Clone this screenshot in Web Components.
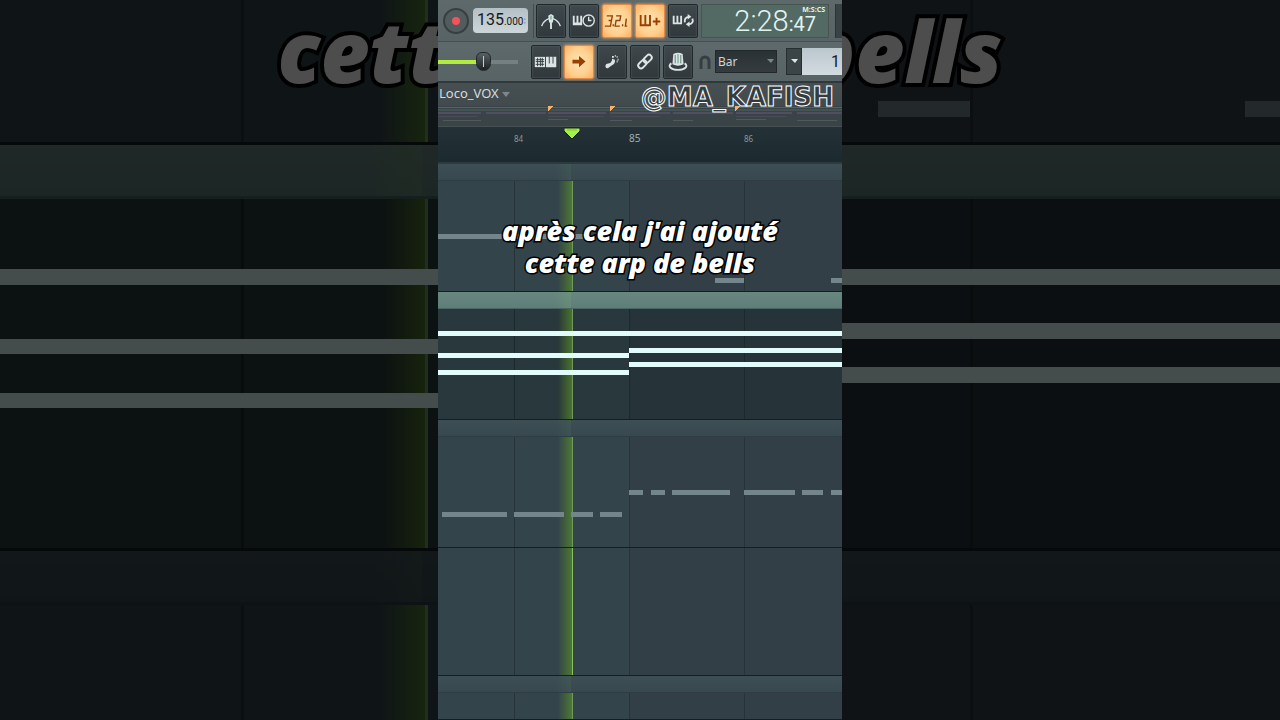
<!DOCTYPE html>
<html lang="fr">
<head>
<meta charset="utf-8">
<meta name="viewport" content="width=device-width, initial-scale=1">
<title>Loco_VOX</title>
<style>
	html,
	body {
		height: 100%;
		margin: 0;
		background: #000;
		font-family: "Noto Sans", "Open Sans", sans-serif;
	}
</style>
</head>
<body>
<daw-stage>
	<daw-tracks slot="backdrop" class="backdrop"></daw-tracks>
	<video-caption slot="backdrop" class="backdrop">cette arp de bells</video-caption>

	<daw-toolbar></daw-toolbar>
	<daw-titlebar handle="@MA_KAFISH">Loco_VOX</daw-titlebar>
	<daw-overview></daw-overview>
	<daw-ruler></daw-ruler>
	<daw-tracks full></daw-tracks>
	<video-caption>après cela j'ai ajouté<br>cette arp de bells</video-caption>
</daw-stage>

<script>
/**
 * Base class: renders the static markup and styles of an element.
 */
class DawElement extends HTMLElement {
	constructor () {
		super();
		this.attachShadow( { mode: 'open' } );
	}

	connectedCallback () {
		this.shadowRoot.innerHTML = `<style>${ this.getStyles() }</style>${ this.getMarkup() }`;
	}

	getStyles () {
		return '';
	}

	getMarkup () {
		return '<slot></slot>';
	}
}

/**
 * Portrait screen over a dimmed, enlarged copy of the tracks.
 */
class DawStage extends DawElement {
	getStyles () {
		return `
			:host {
				display: grid;
				grid-template-columns: 438fr 404fr 438fr;
				position: relative;
				height: 100vh;
				overflow: hidden;
			}

			.backdrop {
				position: absolute;
				inset: 0;
				display: flex;
				flex-direction: column;
				justify-content: center;
				opacity: 0.3;
				--lane: 352px;
				--head: 54px;
				--rule: 3px;
			}

			::slotted(daw-tracks.backdrop) {
				flex: none;
				padding-top: 30px;
			}

			::slotted(video-caption.backdrop) {
				top: 0;
				--size: 85px;
				--leading: 100px;
				--outline: 8px;
			}

			main {
				grid-column: 2;
				position: relative;
				display: flex;
				flex-direction: column;
				min-width: 0;
				overflow: hidden;
				background: #33434a;
			}
		`;
	}

	getMarkup () {
		return `
			<div class="backdrop" aria-hidden="true"><slot name="backdrop"></slot></div>
			<main><slot></slot></main>
		`;
	}
}

/**
 * Subtitle text with a black outline.
 */
class VideoCaption extends DawElement {
	getStyles () {
		return `
			:host {
				display: block;
				position: absolute;
				top: 215px;
				left: 0;
				right: 0;
				color: #fff;
				font: italic 800 var(--size, 27px)/var(--leading, 32px) "Open Sans", "Noto Sans", sans-serif;
				font-variant-ligatures: none;
				text-align: center;
				white-space: nowrap;
				-webkit-text-stroke: var(--outline, 3px) #000;
				paint-order: stroke fill;
			}
		`;
	}
}

const ICONS = {
	metronome: '<path d="M5 22q2-6 8-8M25 22q-2-6-8-8" fill="none" stroke="currentColor" stroke-width="1.5"/><path d="M12 11l3-2 3 2-1 7h-1v7h-2v-7h-1z" fill="currentColor"/><path d="M15 11v4" stroke="#3a9a62"/>',
	wait: '<path d="M3 11h2v7h2v-7h2v7h2v-7h2v10H3z" fill="currentColor"/><circle cx="20" cy="16" r="6" fill="#353d41" stroke="currentColor" stroke-width="1.5"/><path d="M20 12v4h3" fill="none" stroke="currentColor" stroke-width="1.5"/>',
	countdown: '<path d="M4 11h6l-1 5H6h3l-1 6H2M14 11h5l-1 5h-4l-1 6h5M25 14l-1 8h2M11 20v2M21 20v2" fill="none" stroke="currentColor" stroke-width="1.5"/>',
	overdub: '<path d="M4 10h2v10h3V10h2v10h3V10h2v12H4z" fill="currentColor"/><path d="M22 13v8M18 17h8" stroke="currentColor" stroke-width="2"/>',
	loop: '<path d="M4 11h2v7h2v-7h2v7h2v-7h2v9H4z" fill="currentColor"/><path d="M17 18q-1-5 4-6M25 14q2 5-4 6" fill="none" stroke="currentColor" stroke-width="2"/><path d="M20 9l4 3-4 3zM22 17l-4 3 4 3z" fill="currentColor"/>',
	typing: '<path d="M3 11h11v11H3z" fill="currentColor"/><path d="M4 14h9M4 16h9M4 19h9M6 12v9M9 12v9M11 12v9" stroke="#353d41"/><path d="M15 11h3v7h1v-7h3v7h1v-7h3v11H15z" fill="currentColor"/>',
	arrow: '<path d="M8 14h7v-4l7 6-7 6v-4H8z" fill="currentColor"/>',
	slide: '<path d="M8 21q0-3 3-3 3 0 4-3v-2l3 1q1 4-3 6-2 1-4 3-3 1-3-2z" fill="currentColor"/><path d="M15 11h2M18 10h1M20 11h1M21 14h1M20 16h1" stroke="currentColor" stroke-width="2"/>',
	link: '<g fill="none" stroke="currentColor" stroke-width="2" transform="rotate(-45 15 16)"><rect x="6" y="13" width="10" height="6" rx="3"/><rect x="14" y="13" width="10" height="6" rx="3"/></g>',
	knob: '<path d="M10 8q5-3 10 0l1 11q-6 3-12 0z" fill="currentColor"/><path d="M12 9v9M18 9v9" stroke="#687377"/><path d="M15 8v10" stroke="#4f9f71"/><path d="M8 18c-5 3 0 7 7 7s12-4 7-7" fill="none" stroke="currentColor" stroke-width="2"/>'
};

/**
 * Square toolbar button. Attributes: icon, label, lit.
 */
class DawButton extends DawElement {
	getStyles () {
		return `
			:host {
				display: block;
				flex: none;
			}

			button {
				display: block;
				width: 30px;
				height: 34px;
				padding: 0;
				border: 1px solid #20282b;
				border-radius: 2px;
				background: linear-gradient(#3f484c, #30383c);
				box-shadow: inset 0 0 2px #5d686c;
				color: #dce4e6;
			}

			button[aria-pressed="true"] {
				border-color: #dd8b47;
				background: radial-gradient(#ffe3b5, #ffd08e 60%, #ffac60);
				box-shadow: 0 0 3px #f2a45c;
				color: #984000;
			}

			svg {
				display: block;
				width: 28px;
				height: 32px;
			}
		`;
	}

	getMarkup () {
		return `
			<button type="button" aria-label="${ this.getAttribute( 'label' ) }" aria-pressed="${ this.hasAttribute( 'lit' ) }">
				<svg viewBox="0 0 30 33" aria-hidden="true">${ ICONS[ this.getAttribute( 'icon' ) ] }</svg>
			</button>
		`;
	}
}

/**
 * Transport and tools, in two rows.
 */
class DawToolbar extends DawElement {
	getStyles () {
		return `
			:host {
				display: block;
				flex: none;
				color: #dce4e6;
			}

			.row {
				display: flex;
				align-items: center;
				height: 42px;
				box-sizing: border-box;
				overflow: hidden;
				border-bottom: 1px solid #465053;
				background: linear-gradient(#5e696b, #586365);
			}

			.row + .row {
				height: 41px;
				border-bottom: 2px solid #30383b;
			}

			.buttons {
				display: flex;
				flex: none;
				gap: 3px;
				padding: 0 3px 0 2px;
				border-left: 1px solid #424c4f;
			}

			.record {
				flex: none;
				box-sizing: border-box;
				width: 26px;
				height: 26px;
				margin: 0 4px 0 5px;
				padding: 7px;
				border: 2px solid #363e41;
				border-radius: 50%;
				background: #525b5e;
			}

			.record::before {
				content: "";
				display: block;
				width: 8px;
				height: 8px;
				border-radius: 50%;
				background: #f6525c;
			}

			.tempo {
				display: flex;
				flex: none;
				align-items: center;
				box-sizing: border-box;
				width: 55px;
				height: 25px;
				margin-right: 5px;
				padding-left: 4px;
				border-radius: 4px;
				background: linear-gradient(#b4c0c7, #ccd6da);
				color: #15191b;
				font: 16px/25px Roboto, "Noto Sans", sans-serif;
			}

			.tempo small {
				font-size: 10px;
			}

			.tempo svg {
				width: 5px;
				height: 14px;
				margin: 0 1px 0 auto;
			}

			.time {
				display: flex;
				flex: 1;
				align-items: baseline;
				justify-content: flex-end;
				position: relative;
				height: 32px;
				margin-right: 6px;
				padding-right: 12px;
				border: 1px solid #47554f;
				background: #536964;
				color: #e2f4ef;
				font: 300 29px/33px Roboto, "Noto Sans", sans-serif;
				white-space: nowrap;
			}

			.time small {
				font-size: 20px;
				font-weight: 400;
			}

			.time abbr {
				position: absolute;
				top: 0;
				right: 3px;
				font: bold 7px/9px "Noto Sans", sans-serif;
			}

			.edge {
				flex: none;
				width: 6px;
				height: 34px;
				border-left: 1px solid #2b3336;
				background: #394245;
			}

			input[type="range"] {
				flex: none;
				appearance: none;
				width: 80px;
				height: 20px;
				margin: 0 12px 0 0;
				background: linear-gradient(to right, #b1ed3e 58%, #758083 58%) center / 100% 4px no-repeat;
			}

			input[type="range"]::-webkit-slider-thumb {
				appearance: none;
				width: 15px;
				height: 19px;
				border: 1px solid #22282a;
				border-radius: 7px 7px 9px 9px;
				background: linear-gradient(to right, transparent 45%, #c6cdcf 45% 55%, transparent 55%) center / 100% 11px no-repeat, linear-gradient(#596164, #1d2224);
			}

			.tools {
				border-left: 0;
				padding: 0 6px 0 1px;
			}

			.magnet {
				flex: none;
				width: 12px;
				height: 14px;
				margin-right: 4px;
			}

			.snap {
				position: relative;
				flex: none;
				margin-right: 9px;
			}

			.snap svg {
				position: absolute;
				top: 9px;
				right: 3px;
				width: 7px;
				height: 5px;
			}

			select {
				appearance: none;
				display: block;
				width: 62px;
				height: 23px;
				padding: 0 2px;
				border: 1px solid #22282b;
				border-radius: 0;
				background: linear-gradient(#2b3235, #353c3f);
				color: #ccd4d6;
				font: 12px/20px "Noto Sans", sans-serif;
			}

			.drop {
				flex: none;
				width: 16px;
				height: 27px;
				padding: 0;
				border: 1px solid #262e31;
				background: #3b4447;
			}

			.drop svg {
				display: block;
				width: 7px;
				height: 5px;
				margin: auto;
			}

			.pattern {
				flex: 1;
				min-width: 0;
				height: 27px;
				box-sizing: border-box;
				padding: 0 0 0 29px;
				border: 0;
				background: linear-gradient(#bbc7ce, #d2dbe0);
				color: #171c1f;
				font: 16px Roboto, "Noto Sans", sans-serif;
			}
		`;
	}

	getMarkup () {
		return `
			<div class="row">
				<button class="record" type="button" aria-label="Record"></button>
				<div class="tempo" role="spinbutton" aria-label="Tempo" aria-valuenow="135" tabindex="0">
					<span>135<small>.000</small></span>
					<svg viewBox="0 0 6 14"><path d="M1 5l2-3 2 3zM1 9l2 3 2-3z" fill="#8c989e"/></svg>
				</div>
				<div class="buttons">
					<daw-button icon="metronome" label="Metronome"></daw-button>
					<daw-button icon="wait" label="Wait for input"></daw-button>
					<daw-button icon="countdown" label="Countdown" lit></daw-button>
					<daw-button icon="overdub" label="Overdub" lit></daw-button>
					<daw-button icon="loop" label="Loop recording"></daw-button>
				</div>
				<div class="time"><span>2:28</span><small>:47</small><abbr>M:S:CS</abbr></div>
				<div class="edge"></div>
			</div>
			<div class="row">
				<input type="range" min="0" max="100" value="59" aria-label="Main pitch">
				<div class="buttons tools">
					<daw-button icon="typing" label="Typing keyboard"></daw-button>
					<daw-button icon="arrow" label="Step" lit></daw-button>
					<daw-button icon="slide" label="Slide"></daw-button>
					<daw-button icon="link" label="Link"></daw-button>
					<daw-button icon="knob" label="Multilink"></daw-button>
				</div>
				<svg class="magnet" viewBox="0 0 12 14"><path d="M2 14V6a4 4 0 0 1 8 0v8" fill="none" stroke="#353e41" stroke-width="3"/></svg>
				<div class="snap">
					<select aria-label="Snap"><option>Bar</option></select>
					<svg viewBox="0 0 7 5"><path d="M0 0h7l-3 4z" fill="#7c8689"/></svg>
				</div>
				<button class="drop" type="button" aria-label="Pattern list">
					<svg viewBox="0 0 7 5"><path d="M0 0h7l-3 4z" fill="#dfe6e8"/></svg>
				</button>
				<input class="pattern" type="text" value="1" aria-label="Pattern">
			</div>
		`;
	}
}

/**
 * Clip name on the left, channel handle over the right end.
 */
class DawTitlebar extends DawElement {
	getStyles () {
		return `
			:host {
				display: flex;
				align-items: center;
				flex: none;
				gap: 3px;
				position: relative;
				height: 23px;
				padding-left: 1px;
				background: linear-gradient(#465053, #414a4d);
				color: #d5dcde;
				font-size: 13px;
				line-height: 20px;
			}

			.name {
				padding-bottom: 3px;
			}

			svg {
				width: 8px;
				height: 5px;
			}

			.handle {
				position: absolute;
				z-index: 1;
				top: -1px;
				right: 8px;
				color: #343c3f;
				font: bold 26px/30px "DejaVu Sans", sans-serif;
				-webkit-text-stroke: 1px #fff;
			}
		`;
	}

	getMarkup () {
		return `
			<span class="name"><slot></slot></span>
			<svg viewBox="0 0 8 5"><path d="M0 0h8l-4 5z" fill="#7e888b"/></svg>
			<span class="handle">${ this.getAttribute( 'handle' ) }</span>
		`;
	}
}

/**
 * Miniature of the whole arrangement.
 */
class DawOverview extends DawElement {
	getStyles () {
		return `
			:host {
				display: block;
				flex: none;
				height: 21px;
				background: #3a4448;
			}

			svg {
				display: block;
				width: 100%;
				height: 100%;
			}
		`;
	}

	getMarkup () {
		return `
			<svg viewBox="0 0 404 21" preserveAspectRatio="none" shape-rendering="crispEdges">
				<path d="M0 1h404" stroke="#4d6765" stroke-width="1"/>
				<path d="M0 4h404" stroke="#425553" stroke-width="2"/>
				<path d="M0 7h43M48 7h60M110 7h58M172 7h60M235 7h60M298 7h56M359 7h45" stroke="#504f60" stroke-width="2"/>
				<path d="M0 10h40M110 10h56M172 10h50M298 10h50" stroke="#4c4a58"/>
				<path d="M5 14h38M110 13h20M172 14h22M235 14h20M298 13h30M359 14h40" stroke="#51585e"/>
				<path d="M0 17h404" stroke="#394446" stroke-width="2"/>
				<path d="M0 20h404" stroke="#465052"/>
				<path d="M110 0h5l-5 5zM172 0h5l-5 5zM297 0h5l-5 5z" fill="#f6b170"/>
			</svg>
		`;
	}
}

/**
 * Bar numbers and the song position marker.
 */
class DawRuler extends DawElement {
	getStyles () {
		return `
			:host {
				display: grid;
				grid-template-columns: 76fr 115fr 115fr 98fr;
				flex: none;
				position: relative;
				height: 37px;
				box-sizing: border-box;
				border-bottom: 2px solid #2c3b40;
				background: linear-gradient(#243136, #1c292e);
				color: #8c989b;
				font-size: 8px;
				line-height: 23px;
			}

			.first {
				grid-column: 2;
			}

			.strong {
				color: #a2adb0;
				font-size: 10px;
			}

			svg {
				position: absolute;
				top: 0;
				left: calc(134 / 404 * 100%);
				width: 16px;
				height: 12px;
				margin-left: -8px;
			}
		`;
	}

	getMarkup () {
		return `
			<span class="first">84</span><span class="strong">85</span><span>86</span>
			<svg viewBox="0 0 16 12"><path d="M0 1h16v3l-8 8-8-8z" fill="#a6f04b" stroke="#162014"/><path d="M3 3h10" stroke="#7bc52e"/></svg>
		`;
	}
}

// Notes as [ x, y, width ], on a lane 404 wide and 110 high.
const LANES = [
	{
		head: 'plain',
		notes: [ [ 0, 53, 146 ], [ 277, 97, 29 ], [ 393, 97, 11 ] ]
	},
	{
		head: 'selected',
		dark: true,
		notes: [ [ 0, 22, 404 ], [ 0, 44, 191 ], [ 0, 61, 191 ], [ 191, 39, 213 ], [ 191, 53, 213 ] ]
	},
	{
		head: 'plain',
		notes: [
			[ 4, 75, 65 ], [ 76, 75, 50 ], [ 133, 75, 22 ], [ 162, 75, 22 ],
			[ 191, 53, 14 ], [ 213, 53, 14 ], [ 234, 53, 58 ], [ 306, 53, 51 ], [ 364, 53, 21 ], [ 393, 53, 11 ]
		]
	}
];

/**
 * Stack of piano-roll lanes. With "full", the empty lane and the next track follow.
 */
class DawTracks extends DawElement {
	getStyles () {
		return `
			:host {
				display: flex;
				flex: 1;
				flex-direction: column;
				min-height: 0;
			}

			.head,
			.lane {
				flex: none;
				box-sizing: border-box;
			}

			.head {
				height: var(--head, 17px);
				border-bottom: var(--rule, 1px) solid #2d3d43;
				background: linear-gradient(to right, transparent 29%, #57805a30 33%, transparent 33%), linear-gradient(#3d4e55, #37484f);
			}

			.head.selected {
				border-color: #486661;
				background: linear-gradient(to right, transparent 29%, #7fae7340 33%, transparent 33%), linear-gradient(#68877f, #5e7e78);
			}

			.lane {
				height: var(--lane, 111px);
				border-bottom: var(--rule, 1px) solid #141f23;
			}

			.lane.empty {
				height: 128px;
			}

			.lane.last {
				flex: 1;
				min-height: 20px;
			}

			svg {
				display: block;
				width: 100%;
				height: 100%;
			}
		`;
	}

	getLane ( lane, extra = '' ) {
		const colors = lane.dark ? [ '#29383c', '#263338', '#1c292d' ] : [ '#33454b', '#323f47', '#26343a' ];
		const notes = lane.notes.map( ( [ x, y, w ] ) => `<rect x="${ x }" y="${ y }" width="${ w }" height="5"/>` ).join( '' );
		const bright = extra === 'empty';

		return `
			<div class="lane ${ extra }">
				<svg viewBox="0 0 404 110" preserveAspectRatio="none" shape-rendering="crispEdges">
					<defs>
						<linearGradient id="glow">
							<stop offset="0" stop-color="#5f9620" stop-opacity="0"/>
							<stop offset="1" stop-color="#5f9a20" stop-opacity="${ bright ? '0.9' : '0.6' }"/>
						</linearGradient>
					</defs>
					<rect width="191" height="110" fill="${ colors[ 0 ] }"/>
					<rect x="191" width="213" height="110" fill="${ colors[ 1 ] }"/>
					<path d="M76 0h1v110h-1zM191 0h1v110h-1zM306 0h1v110h-1z" fill="${ colors[ 2 ] }"/>
					<rect x="120" width="14" height="110" fill="url(#glow)"/>
					<rect x="134" width="1" height="110" fill="${ bright ? '#9ee065' : '#7fb065' }" fill-opacity="0.8"/>
					<g fill="${ lane.dark ? '#e2fcfb' : '#74868c' }">${ notes }</g>
				</svg>
			</div>
		`;
	}

	getMarkup () {
		const full = this.hasAttribute( 'full' );
		let html = LANES.map( ( lane, i ) => {
			const head = full || i > 0 ? `<div class="head ${ lane.head }"></div>` : '';
			return head + this.getLane( lane );
		} ).join( '' );

		if ( full ) {
			html += this.getLane( { notes: [] }, 'empty' );
			html += '<div class="head"></div>';
			html += this.getLane( { notes: [] }, 'last' );
		}
		return html;
	}
}

customElements.define( 'daw-button', DawButton );
customElements.define( 'daw-toolbar', DawToolbar );
customElements.define( 'daw-titlebar', DawTitlebar );
customElements.define( 'daw-overview', DawOverview );
customElements.define( 'daw-ruler', DawRuler );
customElements.define( 'daw-tracks', DawTracks );
customElements.define( 'video-caption', VideoCaption );
customElements.define( 'daw-stage', DawStage );
</script>
</body>
</html>
